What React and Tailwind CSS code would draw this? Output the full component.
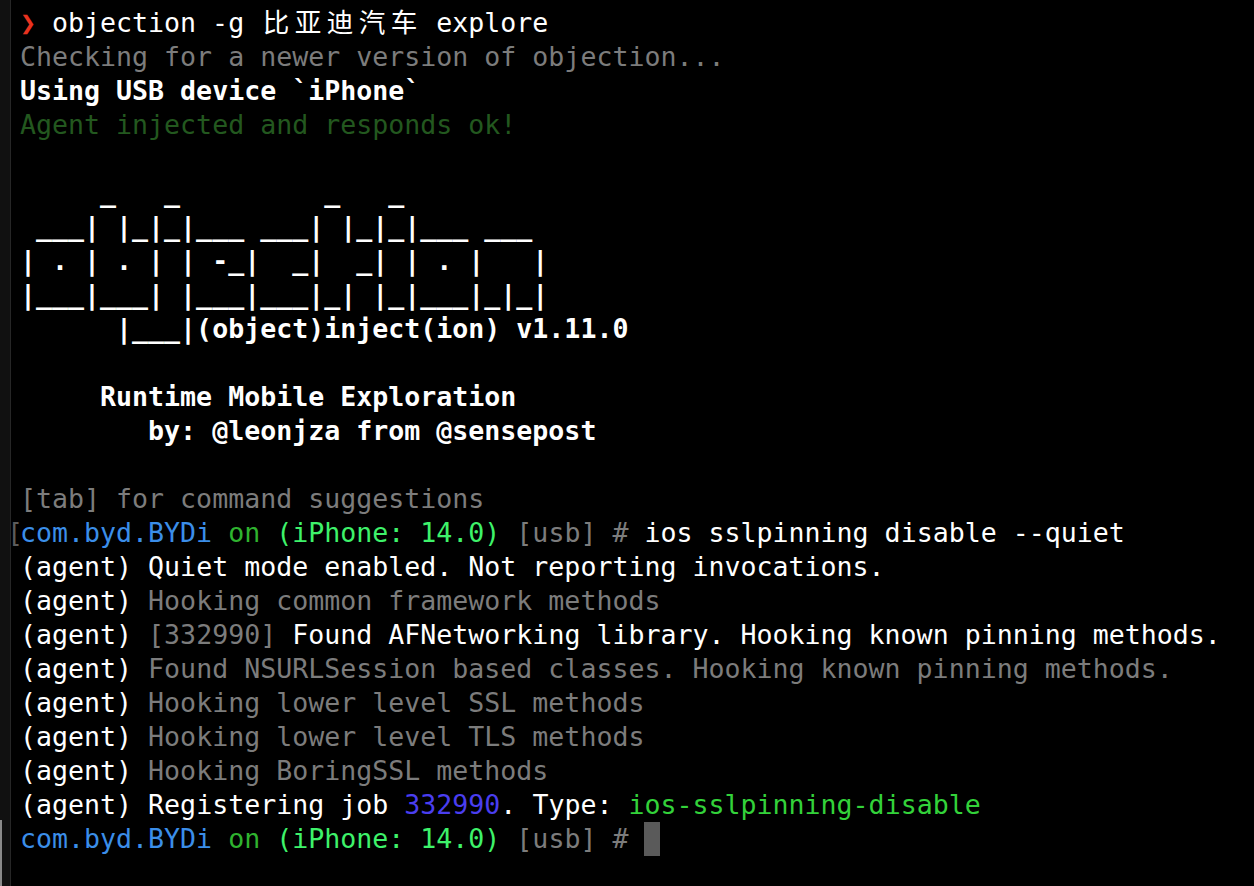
import clsx from 'clsx';

// Terminal palette
const c = {
  white: 'text-white',
  dim: 'text-[#7c7c7c]',
  darkGreen: 'text-[#23581f]',
  blue: 'text-[#3b8ee9]',
  on: 'text-[#2fb32f]',
  device: 'text-[#3ef26a]',
  job: 'text-[#4a3ef0]',
  type: 'text-[#33d23a]',
};

function Row({ children, className }) {
  return <div className={clsx('h-[34px] whitespace-pre', className)}>{children}</div>;
}

// Each CJK glyph takes two terminal cells
function Wide({ text }) {
  return text.split('').map((ch, i) => (
    <span key={i} className="inline-block w-[32px] text-center">
      {ch}
    </span>
  ));
}

function Prompt({ bracket }) {
  return (
    <>
      {bracket && <span className="-ml-[13px] inline-block w-[13px] text-[#5c5c5c]">[</span>}
      <span className={c.blue}>com.byd.BYDi</span>
      <span className={c.on}> on </span>
      <span className={c.device}>(iPhone: 14.0)</span>
      <span className={c.dim}> [usb] # </span>
    </>
  );
}

const banner = [
  '     _   _         _   _',
  ' ___| |_|_|___ ___| |_|_|___ ___',
  '| . | . | | -_|  _|  _| | . |   |',
  '|___|___| |___|___|_| |_|___|_|_|',
  '      |___|(object)inject(ion) v1.11.0',
];

const agent = [
  [['Quiet mode enabled. Not reporting invocations.', c.white]],
  [['Hooking common framework methods', c.dim]],
  [
    ['[332990] ', c.dim],
    ['Found AFNetworking library. Hooking known pinning methods.', c.white],
  ],
  [['Found NSURLSession based classes. Hooking known pinning methods.', c.dim]],
  [['Hooking lower level SSL methods', c.dim]],
  [['Hooking lower level TLS methods', c.dim]],
  [['Hooking BoringSSL methods', c.dim]],
  [
    ['Registering job ', c.white],
    ['332990', c.job],
    ['. Type: ', c.white],
    ['ios-sslpinning-disable', c.type],
  ],
];

export default function App() {
  return (
    <div className="flex h-[886px] w-full overflow-hidden bg-black">
      {/* window edge */}
      <div className="flex w-[11px] shrink-0 flex-col justify-end border-r border-[#262626] bg-[#111111]">
        <div className="h-[66px] w-[2px] bg-[#8a8a8a]" />
      </div>

      <div className="flex-1 pl-[9px] pt-[6px] font-['DejaVu_Sans_Mono','Noto_Sans_CJK_SC',monospace] text-[26.6px] leading-[34px] text-white">
        <Row>
          <span className="inline-block w-[16px] text-[#e8321f]">❯</span>
          {' objection -g '}
          <Wide text="比亚迪汽车" />
          {' explore'}
        </Row>
        <Row className={c.dim}>Checking for a newer version of objection...</Row>
        <Row className="font-bold">Using USB device `iPhone`</Row>
        <Row className={c.darkGreen}>Agent injected and responds ok!</Row>
        <Row />

        {banner.map((line, i) => (
          <Row key={i} className="font-bold">
            {line}
          </Row>
        ))}
        <Row />
        <Row className="font-bold">{'     Runtime Mobile Exploration'}</Row>
        <Row className="font-bold">{'        by: @leonjza from @sensepost'}</Row>
        <Row />
        <Row className={c.dim}>[tab] for command suggestions</Row>

        <Row>
          <Prompt bracket />
          <span className={c.white}>ios sslpinning disable --quiet</span>
        </Row>
        {agent.map((parts, i) => (
          <Row key={i}>
            {'(agent) '}
            {parts.map(([text, cls], j) => (
              <span key={j} className={cls}>
                {text}
              </span>
            ))}
          </Row>
        ))}
        <Row className="flex">
          <Prompt />
          <span className="inline-block h-[34px] w-[16px] bg-[#5a5a5a]" />
        </Row>
      </div>
    </div>
  );
}
